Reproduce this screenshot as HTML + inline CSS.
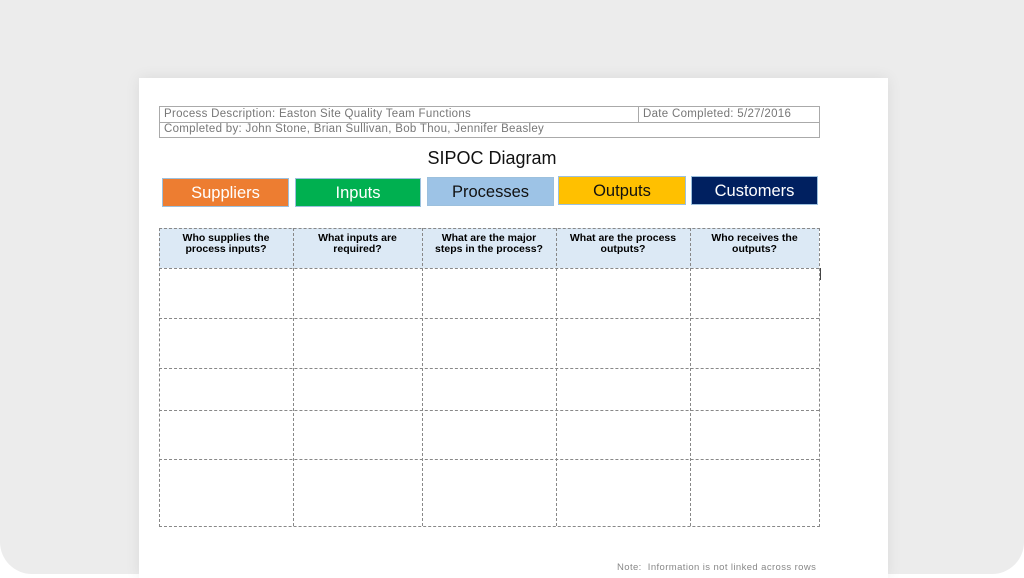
<!DOCTYPE html>
<html><head><style>
body{margin:0;width:1024px;height:574px;background:#fff;overflow:hidden;font-family:"Liberation Sans",sans-serif;}
.bg{position:absolute;left:0;top:0;width:1024px;height:574px;background:#ececec;border-radius:0 0 32px 32px;}
.paper{position:absolute;left:139px;top:78px;width:749px;height:500px;background:#fff;box-shadow:0 0 14px rgba(0,0,0,0.08);}
.a{position:absolute;}
.hd{font-size:11.5px;color:#777;white-space:nowrap;letter-spacing:0.3px;}
.box{position:absolute;height:29px;text-align:center;font-size:16.5px;line-height:29px;box-sizing:border-box;border:1px solid #9cc0dd;}
.th{position:absolute;top:228px;height:40px;font-size:10.5px;font-weight:bold;text-align:center;line-height:11px;padding-top:3px;box-sizing:border-box;}
</style></head><body>
<div class="bg"></div>
<div class="paper"></div>
<div class="a" style="left:159px;top:106px;width:659px;height:30px;border:1px solid #aaa;"></div>
<div class="a" style="left:159px;top:122px;width:660px;height:1px;background:#aaa;"></div>
<div class="a" style="left:638px;top:106px;width:1px;height:16px;background:#aaa;"></div>
<div class="a hd" style="left:164px;top:108px;">Process Description: Easton Site Quality Team Functions</div>
<div class="a hd" style="left:643px;top:108px;">Date Completed: 5/27/2016</div>
<div class="a hd" style="left:164px;top:123px;">Completed by: John Stone, Brian Sullivan, Bob Thou, Jennifer Beasley</div>
<div class="a" style="left:0;width:984px;top:148px;text-align:center;font-size:18px;color:#111;">SIPOC Diagram</div>
<div class="box" style="left:162px;top:178px;width:127px;background:#ed7d31;color:#fff;">Suppliers</div>
<div class="box" style="left:295px;top:178px;width:126px;background:#00b050;color:#fff;">Inputs</div>
<div class="box" style="left:427px;top:177px;width:127px;background:#9dc3e6;color:#111;">Processes</div>
<div class="box" style="left:558px;top:176px;width:128px;background:#ffc000;color:#111;">Outputs</div>
<div class="box" style="left:691px;top:176px;width:127px;background:#002060;color:#fff;">Customers</div>
<div class="a" style="left:159px;top:228px;width:660px;height:40px;background:#dce9f5;"></div>
<div class="a" style="left:159px;top:228px;width:659px;height:297px;border:1px dashed #888;"></div>
<div class="th" style="left:159px;width:134px;top:230px;">Who supplies the<br>process inputs?</div>
<div class="th" style="left:293px;width:129px;top:230px;">What inputs are<br>required?</div>
<div class="th" style="left:422px;width:134px;top:230px;">What are the major<br>steps in the process?</div>
<div class="th" style="left:556px;width:134px;top:230px;">What are the process<br>outputs?</div>
<div class="th" style="left:690px;width:129px;top:230px;">Who receives the<br>outputs?</div>
<div class="a" style="left:293px;top:228px;width:0;height:298px;border-left:1px dashed #888;"></div>
<div class="a" style="left:422px;top:228px;width:0;height:298px;border-left:1px dashed #888;"></div>
<div class="a" style="left:556px;top:228px;width:0;height:298px;border-left:1px dashed #888;"></div>
<div class="a" style="left:690px;top:228px;width:0;height:298px;border-left:1px dashed #888;"></div>
<div class="a" style="left:159px;top:268px;width:660px;border-top:1px dashed #888;"></div>
<div class="a" style="left:159px;top:318px;width:660px;border-top:1px dashed #888;"></div>
<div class="a" style="left:159px;top:368px;width:660px;border-top:1px dashed #888;"></div>
<div class="a" style="left:159px;top:410px;width:660px;border-top:1px dashed #888;"></div>
<div class="a" style="left:159px;top:459px;width:660px;border-top:1px dashed #888;"></div>
<div class="a" style="left:820px;top:268px;width:1px;height:12px;background:#444;"></div>
<div class="a" style="left:617px;top:562px;font-size:9.5px;color:#888;letter-spacing:0.4px;white-space:nowrap;">Note:&nbsp; Information is not linked across rows</div>
</body></html>
